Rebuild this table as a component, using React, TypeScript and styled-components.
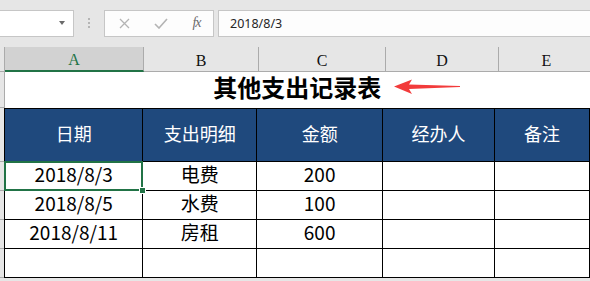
import React from 'react';
import styled, { createGlobalStyle, css } from 'styled-components';

const GlobalStyle = createGlobalStyle`
  html, body {
    margin: 0;
    padding: 0;
    background: #e6e6e6;
    overflow: hidden;
  }
  body {
    font-family: "Noto Sans CJK SC", "Noto Sans", sans-serif;
  }
`;

const GREEN = '#217346';
const HEADER_BLUE = '#1f497d';

const Window = styled.div`
  width: 590px;
  height: 281px;
  overflow: hidden;
  background: #e6e6e6;
`;

/* ---------- formula bar ---------- */

const FormulaBar = styled.div`
  display: flex;
  align-items: center;
  height: 47px;
  padding-bottom: 1px;
  box-sizing: border-box;
`;

const NameBox = styled.div`
  width: 75px;
  height: 27px;
  margin-left: -1px;
  box-sizing: border-box;
  border: 1px solid #c6c6c6;
  background: #fff;
  display: flex;
  align-items: center;
  justify-content: flex-end;
  padding-right: 8px;
`;

const Caret = styled.span`
  width: 0;
  height: 0;
  border-left: 3.5px solid transparent;
  border-right: 3.5px solid transparent;
  border-top: 4px solid #6a6a6a;
`;

const Grip = styled.div`
  width: 30px;
  display: flex;
  flex-direction: column;
  align-items: center;
  gap: 2px;

  span {
    width: 2px;
    height: 2px;
    background: #b5b5b5;
  }
`;

const FuncBox = styled.div`
  width: 110px;
  height: 27px;
  box-sizing: border-box;
  border: 1px solid #c6c6c6;
  background: #fdfdfd;
  display: flex;
  align-items: center;
  padding-left: 11px;
`;

const FuncButton = styled.div<{ $w: number }>`
  width: ${(p) => p.$w}px;
  display: flex;
  justify-content: center;
  align-items: center;
`;

const Fx = styled.span`
  font-family: "Liberation Serif", "DejaVu Serif", serif;
  font-style: italic;
  font-size: 14px;
  color: #6b6b6b;
  letter-spacing: -1px;
  margin-left: -3px;
`;

const FormulaInput = styled.div`
  flex: 1;
  height: 27px;
  margin-left: 4px;
  margin-right: -2px;
  box-sizing: border-box;
  border: 1px solid #c6c6c6;
  background: #fdfdfd;
  display: flex;
  align-items: center;
  padding-left: 11px;
  font-family: "Noto Sans", sans-serif;
  font-size: 12.5px;
  color: #262626;
`;

/* ---------- sheet ---------- */

const cols = [139, 115, 127, 113, 96];

const ColumnHeaders = styled.div`
  display: flex;
  height: 25px;
`;

const Corner = styled.div`
  width: 5px;
  flex: none;
  box-sizing: border-box;
  border-right: 1px solid #ababab;
  border-bottom: 1px solid #ababab;
`;

const ColLetter = styled.div<{ $w: number; $active?: boolean }>`
  width: ${(p) => p.$w}px;
  flex: none;
  box-sizing: border-box;
  display: flex;
  align-items: center;
  justify-content: center;
  padding-top: 3px;
  font-family: "Liberation Serif", "DejaVu Serif", serif;
  font-size: 16px;
  color: #111;
  border-right: 1px solid #ababab;
  border-bottom: 1px solid #ababab;
  ${(p) =>
    p.$active &&
    css`
      background: #d2d2d2;
      color: ${GREEN};
      border-bottom: 2px solid ${GREEN};
    `}
`;

const SheetBody = styled.div`
  display: flex;
`;

const RowGutter = styled.div`
  width: 5px;
  flex: none;
  display: flex;
  flex-direction: column;
`;

const GutterCell = styled.div<{ $h: number }>`
  height: ${(p) => p.$h}px;
  flex: none;
  box-sizing: border-box;
  border-right: 1px solid #ababab;
  border-bottom: 1px solid #ababab;
`;

const Grid = styled.table`
  border-collapse: collapse;
  table-layout: fixed;
  background: #fff;
  margin-left: -1px;
`;

const TitleCell = styled.td`
  height: 36px;
  padding: 0 0 5px;
  box-sizing: border-box;
  position: relative;
  text-align: center;
  vertical-align: middle;
  font-size: 24px;
  line-height: 1;
  font-weight: 700;
  color: #000;
  border-bottom: 1px solid #000;
  border-left: 1px solid #ababab;
`;

const Arrow = styled.svg`
  position: absolute;
  left: 385px;
  top: 6px;
`;

const HeadCell = styled.td`
  height: 53px;
  padding: 0 0 3px;
  box-sizing: border-box;
  background: ${HEADER_BLUE};
  color: #fff;
  font-size: 18px;
  text-align: center;
  vertical-align: middle;
  border: 1px solid #000;
`;

const DataCell = styled.td<{ $selected?: boolean }>`
  height: 29px;
  padding: 0 0 4px;
  box-sizing: border-box;
  font-size: 19px;
  color: #000;
  text-align: center;
  vertical-align: middle;
  border: 1px solid #000;
  position: relative;
  line-height: 1;

  ${(p) =>
    p.$selected &&
    css`
      &::after {
        content: '';
        position: absolute;
        left: -1px;
        top: -1px;
        right: -1px;
        bottom: -1px;
        border: 2px solid ${GREEN};
        pointer-events: none;
      }
      &::before {
        content: '';
        position: absolute;
        right: -4px;
        bottom: -4px;
        width: 5px;
        height: 5px;
        background: ${GREEN};
        border: 1px solid #fff;
        z-index: 1;
      }
    `}
`;

type Row = { date: string; item: string; amount: string };

const rows: Row[] = [
  { date: '2018/8/3', item: '电费', amount: '200' },
  { date: '2018/8/5', item: '水费', amount: '100' },
  { date: '2018/8/11', item: '房租', amount: '600' },
  { date: '', item: '', amount: '' },
];

const headings = ['日期', '支出明细', '金额', '经办人', '备注'];

export default function App() {
  return (
    <Window>
      <GlobalStyle />
      <FormulaBar>
        <NameBox>
          <Caret />
        </NameBox>
        <Grip>
          <span />
          <span />
          <span />
        </Grip>
        <FuncBox>
          <FuncButton $w={16}>
            <svg width="11" height="11" viewBox="0 0 11 11">
              <path d="M1 1L10 10M10 1L1 10" stroke="#b4b4b4" strokeWidth="1.3" />
            </svg>
          </FuncButton>
          <FuncButton $w={58}>
            <svg width="14" height="11" viewBox="0 0 14 11">
              <path d="M1 6L5 10L13 1" stroke="#b4b4b4" strokeWidth="1.6" fill="none" />
            </svg>
          </FuncButton>
          <FuncButton $w={16}>
            <Fx>fx</Fx>
          </FuncButton>
        </FuncBox>
        <FormulaInput>2018/8/3</FormulaInput>
      </FormulaBar>

      <ColumnHeaders>
        <Corner />
        {['A', 'B', 'C', 'D', 'E'].map((c, i) => (
          <ColLetter key={c} $w={cols[i]} $active={i === 0}>
            {c}
          </ColLetter>
        ))}
      </ColumnHeaders>

      <SheetBody>
        <RowGutter>
          <GutterCell $h={36} />
          <GutterCell $h={54} />
          {rows.map((_, i) => (
            <GutterCell key={i} $h={29} />
          ))}
        </RowGutter>
        <Grid>
          <colgroup>
            {cols.map((w, i) => (
              <col key={i} style={{ width: w }} />
            ))}
          </colgroup>
          <tbody>
            <tr>
              <TitleCell colSpan={5}>
                其他支出记录表
                <Arrow width="72" height="20" viewBox="0 0 72 20">
                  <path
                    d="M4 8.5L22 1.5L19 6.5L70 8L70 9L19 11L22 16Z"
                    fill="#f23b3b"
                  />
                </Arrow>
              </TitleCell>
            </tr>
            <tr>
              {headings.map((h) => (
                <HeadCell key={h}>{h}</HeadCell>
              ))}
            </tr>
            {rows.map((r, i) => (
              <tr key={i}>
                <DataCell $selected={i === 0}>{r.date}</DataCell>
                <DataCell>{r.item}</DataCell>
                <DataCell>{r.amount}</DataCell>
                <DataCell />
                <DataCell />
              </tr>
            ))}
          </tbody>
        </Grid>
      </SheetBody>
    </Window>
  );
}
